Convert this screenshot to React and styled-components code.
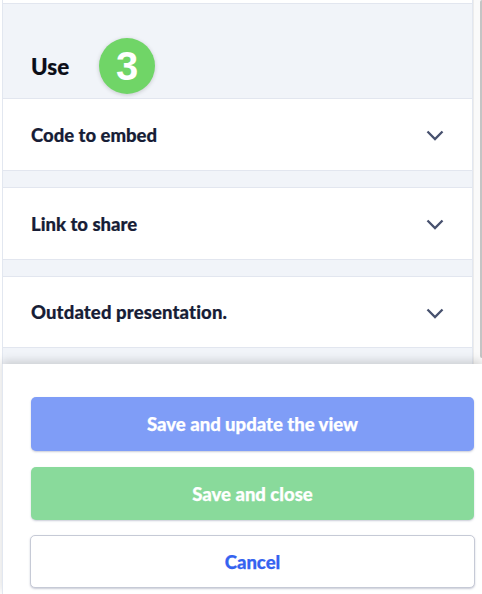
import React from "react";
import styled, { createGlobalStyle } from "styled-components";

const Global = createGlobalStyle`
  html, body { margin: 0; padding: 0; background: #fff; }
  body { font-family: Lato, "Liberation Sans", sans-serif; overflow: hidden; }
`;
const Page = styled.div`
  width: 482px; height: 594px; overflow: hidden; display: flex; flex-direction: column; position: relative; background:#fff;
`;
const Upper = styled.div`
  height: 364px; flex: none; display: flex; overflow: hidden; padding-left: 2px; box-sizing: border-box;
`;
const Panel = styled.div`
  width: 471px; flex: none; box-sizing: border-box; padding-top: 3px;
  border-left: 1px solid #e2e7f0; border-right: 1px solid #e2e7f0;
`;
const Rail = styled.div`
  flex: 1; display: flex; justify-content: flex-end; background: #fafafa; border-left: 1px solid #ececec;
`;
const Thumb = styled.div`
  width: 2.5px; height: 358px; background: #c4c4c4; border-radius: 2px 0 0 2px;
`;
const Header = styled.div`
  background: #f1f4f9; border-top: 1px solid #e2e6ef; border-bottom: 1px solid #e2e6ef;
  display: flex; align-items: flex-end; padding: 0 0 4px 28px; box-sizing: border-box; height: 96px;
`;
const Title = styled.h2`
  margin: 0 0 14px; font-size: 22.4px; font-weight: 900; color: #0b0d17; width: 67px; line-height: 26px; -webkit-text-stroke: .2px #0b0d17;
`;
const Badge = styled.div`
  width: 56px; height: 56px; border-radius: 50%; background: #70d567; color: #fff; display: flex; align-items: center; justify-content: center;
  font-family: "Liberation Sans", Arial, sans-serif; font-weight: 700; font-size: 40px; box-shadow: 0 1px 4px rgba(0,0,0,.18);
  margin-left: 1px;
`;
const Row = styled.div`
  height: ${p => p.$h || 71}px; background: #fff; border-bottom: 1px solid #e2e6ef; display: flex; align-items: center; justify-content: space-between;
  padding: 0 28px 0 28px; font-size: 18.5px; font-weight: 900; color: #171d36; letter-spacing: ${p => p.$ls || "0"}; -webkit-text-stroke: .2px #171d36;
`;
const Gap = styled.div`
  height: 16px; background: #f1f4f9; border-bottom: 1px solid #e2e6ef;
`;
const Footer = styled.div`
  flex: 1; margin-left: 2px; border-left: 1px solid #e2e7f0; background: #fff; box-shadow: 0 -3px 9px rgba(0,0,0,.16); position: relative; padding: 33px 8px 0 28px; display: flex; flex-direction: column;
`;
const Btn = styled.button`
  height: ${p => p.$h}px; margin-bottom: ${p => p.$mb}px; border-radius: 5px; font-family: inherit; font-weight: 900; font-size: 18.5px; padding: 0; width: 443px; flex: none;
  background: ${p => p.$bg}; color: ${p => p.$fg}; border: ${p => p.$outline ? "1px solid #c6cad6" : "none"}; -webkit-text-stroke: .25px ${p => p.$fg};
  box-shadow: 0 1px 2px rgba(60,70,110,.28);
`;
const Outline = styled(Btn)`
  margin-left: -1px; width: 445px;
`;
const Chevron = styled.svg`
  margin-top: 2px;
`;

const Arrow = () => (
  <Chevron width="18" height="11" viewBox="0 0 18 11" fill="none" stroke="#47516e" strokeWidth="2.3"><path d="M1.5 1.5L9 9L16.5 1.5" /></Chevron>
);

export default function App() {
  return (
    <Page>
      <Global />
      <Upper>
        <Panel>
          <Header><Title>Use</Title><Badge>3</Badge></Header>
          <Row>Code to embed<Arrow /></Row>
          <Gap />
          <Row>Link to share<Arrow /></Row>
          <Gap />
          <Row $h={70} $ls=".12px">Outdated presentation.<Arrow /></Row>
          <Gap />
        </Panel>
        <Rail><Thumb /></Rail>
      </Upper>
      <Footer>
        <Btn $h={54} $mb={16} $bg="#7f9df7" $fg="#fff">Save and update the view</Btn>
        <Btn $h={53} $mb={15} $bg="#89da9b" $fg="#fff">Save and close</Btn>
        <Outline $h={53} $mb={0} $bg="#fff" $fg="#3563f0" $outline>Cancel</Outline>
      </Footer>
    </Page>
  );
}
